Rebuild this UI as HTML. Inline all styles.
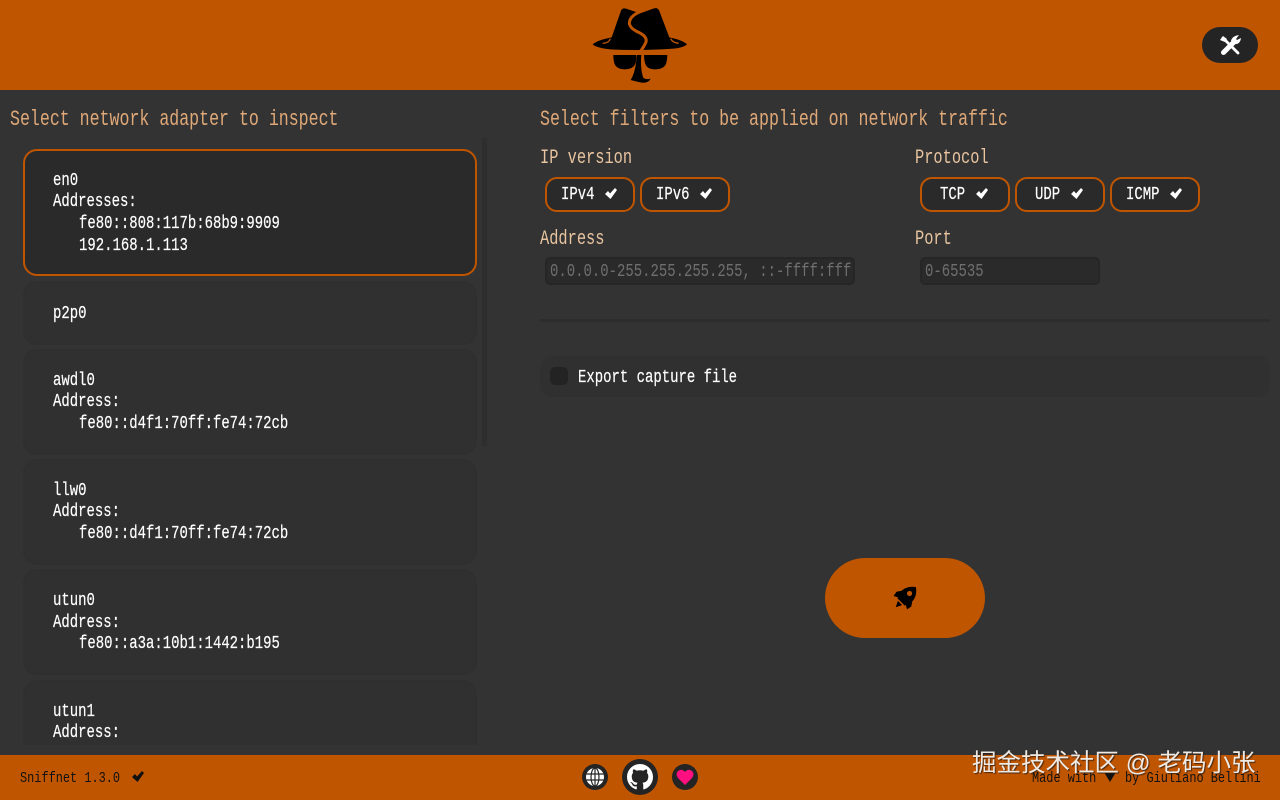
<!DOCTYPE html>
<html><head><meta charset="utf-8"><style>
html,body{margin:0;padding:0;width:1280px;height:800px;overflow:hidden;background:#333333}
body{position:relative;font-family:"Liberation Mono",monospace}
.b{position:absolute;box-sizing:border-box}
.t{position:absolute;white-space:pre;transform-origin:0 50%;line-height:1}
.h{font-size:22px;color:#dfa878;transform:scaleX(.754)}
.l{font-size:20px;color:#e8c4a0;transform:scaleX(.767);margin-top:1px}
.w{font-size:18px;color:#fff;transform:scaleX(.775);margin-top:1px;-webkit-text-stroke:.2px #fff}
.p{font-size:18px;color:#6f6f6f;transform:scaleX(.775);margin-top:1px}
.f{font-size:15px;color:#111;transform:scaleX(.794);margin-top:1px}
.card{left:23px;width:454px;background:#303030;border:2px solid #2f2f2f;border-radius:14px}
.tog{top:177px;width:90px;height:35px;background:#2a2a2a;border:2px solid #c05500;border-radius:12px}
svg{position:absolute;display:block}
</style></head><body>
<div class="b" style="left:0;top:0;width:1280px;height:90px;background:#c05500"></div>

<svg style="left:560px;top:0" width="160" height="90" viewBox="0 0 480 270">
<path fill="#000" d="M98 133Q112 120 155 112L183 32Q187 23 198 26L240 40L282 25Q294 22 298 33L328 112Q368 120 381 133Q372 142 340 146Q240 153 150 148Q108 143 98 133Z"/>
<path fill="none" stroke="#c05500" stroke-width="9" d="M238 36Q208 50 208 70Q210 86 238 98Q262 110 258 126Q252 140 240 156"/>
<path fill="none" stroke="#c05500" stroke-width="4" d="M128 130Q146 130 151 116M332 116Q338 128 356 130"/>
<path fill="#000" d="M160 165H228Q230 180 226 192Q218 208 195 208Q170 208 163 190Q160 180 160 165ZM252 165H322Q322 180 318 192Q310 208 285 208Q262 208 256 192Q252 180 252 165ZM230 165H244Q240 205 250 234Q262 240 272 235Q266 250 245 248Q232 245 212 240Q228 215 230 165Z"/>
</svg>

<div class="b" style="left:1202px;top:27px;width:56px;height:36px;border-radius:18px;background:#242424"></div>
<svg style="left:1218px;top:33px" width="24" height="24" viewBox="0 0 24 24">
<path fill="none" stroke="#fff" stroke-width="2.8" stroke-linecap="round" d="M5 5L20 20"/>
<path fill="#fff" d="M2 7L5 3L9 6L7 9Z"/>
<path fill="none" stroke="#fff" stroke-width="5" stroke-linecap="round" d="M5.5 19.5L16 9"/>
<path fill="#fff" d="M13 8Q14 3 21 2L18 6L19 7L23 5Q22 12 16 11Z"/>
</svg>

<div class="t h" style="left:10px;top:109px">Select network adapter to inspect</div>
<div class="t h" style="left:540px;top:109px">Select filters to be applied on network traffic</div>

<div style="position:absolute;left:0;top:130px;width:500px;height:615px;overflow:hidden">
<div class="b card" style="top:19px;height:127px;background:#2a2a2a;border-color:#c05500"></div>
<div class="b card" style="top:151px;height:64px"></div>
<div class="b card" style="top:219px;height:106px"></div>
<div class="b card" style="top:329px;height:106px"></div>
<div class="b card" style="top:439px;height:106px"></div>
<div class="b card" style="top:550px;height:106px"></div>
<div class="b" style="left:482px;top:7px;width:5px;height:310px;background:#2e2e2e;border-radius:3px"></div>
<div class="t w" style="left:53px;top:41px">en0</div>
<div class="t w" style="left:53px;top:62px">Addresses:</div>
<div class="t w" style="left:79px;top:84px">fe80::808:117b:68b9:9909</div>
<div class="t w" style="left:79px;top:106px">192.168.1.113</div>
<div class="t w" style="left:53px;top:174px">p2p0</div>
<div class="t w" style="left:53px;top:241px">awdl0</div>
<div class="t w" style="left:53px;top:262px">Address:</div>
<div class="t w" style="left:79px;top:284px">fe80::d4f1:70ff:fe74:72cb</div>
<div class="t w" style="left:53px;top:351px">llw0</div>
<div class="t w" style="left:53px;top:372px">Address:</div>
<div class="t w" style="left:79px;top:394px">fe80::d4f1:70ff:fe74:72cb</div>
<div class="t w" style="left:53px;top:461px">utun0</div>
<div class="t w" style="left:53px;top:483px">Address:</div>
<div class="t w" style="left:79px;top:504px">fe80::a3a:10b1:1442:b195</div>
<div class="t w" style="left:53px;top:572px">utun1</div>
<div class="t w" style="left:53px;top:593px">Address:</div>
</div>

<div class="t l" style="left:540px;top:148px">IP version</div>
<div class="t l" style="left:915px;top:148px">Protocol</div>
<div class="t l" style="left:540px;top:229px">Address</div>
<div class="t l" style="left:915px;top:229px">Port</div>

<div class="b tog" style="left:545px"></div>
<div class="b tog" style="left:640px"></div>
<div class="b tog" style="left:920px"></div>
<div class="b tog" style="left:1015px"></div>
<div class="b tog" style="left:1110px"></div>
<div class="t w" style="left:561px;top:185px">IPv4</div>
<div class="t w" style="left:656px;top:185px">IPv6</div>
<div class="t w" style="left:940px;top:185px">TCP</div>
<div class="t w" style="left:1035px;top:185px">UDP</div>
<div class="t w" style="left:1126px;top:185px">ICMP</div>
<svg width="0" height="0"><defs><path id="c" d="M1 7L4 4L6 6.5L11 1L13 3L6.5 12Z"/></defs></svg>
<svg style="left:604px;top:187px" width="14" height="14" viewBox="0 0 14 14" fill="#fff"><use href="#c"/></svg>
<svg style="left:699px;top:187px" width="14" height="14" viewBox="0 0 14 14" fill="#fff"><use href="#c"/></svg>
<svg style="left:975px;top:187px" width="14" height="14" viewBox="0 0 14 14" fill="#fff"><use href="#c"/></svg>
<svg style="left:1070px;top:187px" width="14" height="14" viewBox="0 0 14 14" fill="#fff"><use href="#c"/></svg>
<svg style="left:1169px;top:187px" width="14" height="14" viewBox="0 0 14 14" fill="#fff"><use href="#c"/></svg>

<div class="b" style="left:545px;top:257px;width:310px;height:28px;background:#2a2a2a;border:2px solid #262626;border-radius:5px"></div>
<div class="b" style="left:920px;top:257px;width:180px;height:28px;background:#2a2a2a;border:2px solid #262626;border-radius:5px"></div>
<div class="t p" style="left:550px;top:262px">0.0.0.0-255.255.255.255, ::-ffff:fff</div>
<div class="t p" style="left:925px;top:262px">0-65535</div>

<div class="b" style="left:540px;top:319px;width:730px;height:3px;background:#2d2d2d"></div>
<div class="b" style="left:540px;top:356px;width:730px;height:41px;background:#303030;border-radius:12px"></div>
<div class="b" style="left:550px;top:367px;width:18px;height:18px;background:#232323;border-radius:5px"></div>
<div class="t w" style="left:578px;top:368px">Export capture file</div>

<div class="b" style="left:825px;top:558px;width:160px;height:80px;border-radius:40px;background:#c05500"></div>
<svg style="left:891px;top:582px" width="30" height="30" viewBox="0 0 30 30">
<g transform="rotate(45 15 15)">
<path fill="#000" d="M15 1Q23.5 7 22.5 17L20 22H10L7.5 17Q6.5 7 15 1Z"/>
<path fill="#000" d="M8 13L4.5 18L5.5 23L11 20ZM22 13L25.5 18L24.5 23L19 20Z"/>
<path fill="#000" d="M12 23.5H18L15 29.5Z"/>
<circle cx="15" cy="10" r="2.6" fill="#c05500"/>
</g>
</svg>

<div class="b" style="left:0;top:755px;width:1280px;height:45px;background:#c05500"></div>
<div class="t f" style="left:20px;top:770px">Sniffnet 1.3.0</div>
<svg style="left:131px;top:770px" width="14" height="14" viewBox="0 0 14 14" fill="#111"><use href="#c"/></svg>

<div class="b" style="left:582px;top:764px;width:26px;height:26px;border-radius:50%;background:#242424"></div>
<svg style="left:585px;top:767px" width="20" height="20" viewBox="0 0 20 20">
<circle cx="10" cy="10" r="9" fill="#fff"/>
<g fill="none" stroke="#242424" stroke-width="1.2">
<ellipse cx="10" cy="10" rx="4" ry="9"/><path d="M10 1V19M1.5 7H18.5M1.5 13H18.5"/>
</g></svg>

<div class="b" style="left:622px;top:759px;width:36px;height:36px;border-radius:50%;background:#242424"></div>
<svg style="left:627px;top:764px" width="26" height="26" viewBox="0 0 16 16">
<path fill="#fff" d="M8 0C3.58 0 0 3.58 0 8c0 3.54 2.29 6.53 5.47 7.59.4.07.55-.17.55-.38 0-.19-.01-.82-.01-1.49-2.01.37-2.53-.49-2.69-.94-.09-.23-.48-.94-.82-1.13-.28-.15-.68-.52-.01-.53.63-.01 1.08.58 1.23.82.72 1.21 1.87.87 2.33.66.07-.52.28-.87.51-1.07-1.78-.2-3.64-.89-3.64-3.95 0-.87.31-1.59.82-2.15-.08-.2-.36-1.02.08-2.12 0 0 .67-.21 2.2.82.64-.18 1.32-.27 2-.27.68 0 1.36.09 2 .27 1.53-1.04 2.2-.82 2.2-.82.44 1.1.16 1.92.08 2.12.51.56.82 1.27.82 2.15 0 3.07-1.87 3.75-3.65 3.95.29.25.54.73.54 1.48 0 1.07-.01 1.93-.01 2.2 0 .21.15.46.55.38A8.013 8.013 0 0016 8c0-4.42-3.58-8-8-8z"/>
</svg>

<div class="b" style="left:672px;top:764px;width:26px;height:26px;border-radius:50%;background:#242424"></div>
<svg style="left:676px;top:769px" width="18" height="17" viewBox="0 0 18 17">
<path fill="#ff0f80" d="M9 16L2 9Q-1 5 2 2Q6 -1 9 3Q12 -1 16 2Q19 5 16 9Z"/>
</svg>

<div class="t f" style="left:1032px;top:770px">Made with</div>
<svg style="left:1104px;top:773px" width="12" height="9" viewBox="0 0 12 10"><path fill="#111" d="M0 0H12L6 10Z"/></svg>
<div class="t f" style="left:1125px;top:770px">by Giuliano Bellini</div>

<div class="t" style="left:972px;top:752px;font-family:'Liberation Sans','Noto Sans CJK SC',sans-serif;font-size:24.5px;color:#efe9e3;text-shadow:1px 1px 1px rgba(50,30,15,.85)">掘金技术社区 @ 老码小张</div>
</body></html>
